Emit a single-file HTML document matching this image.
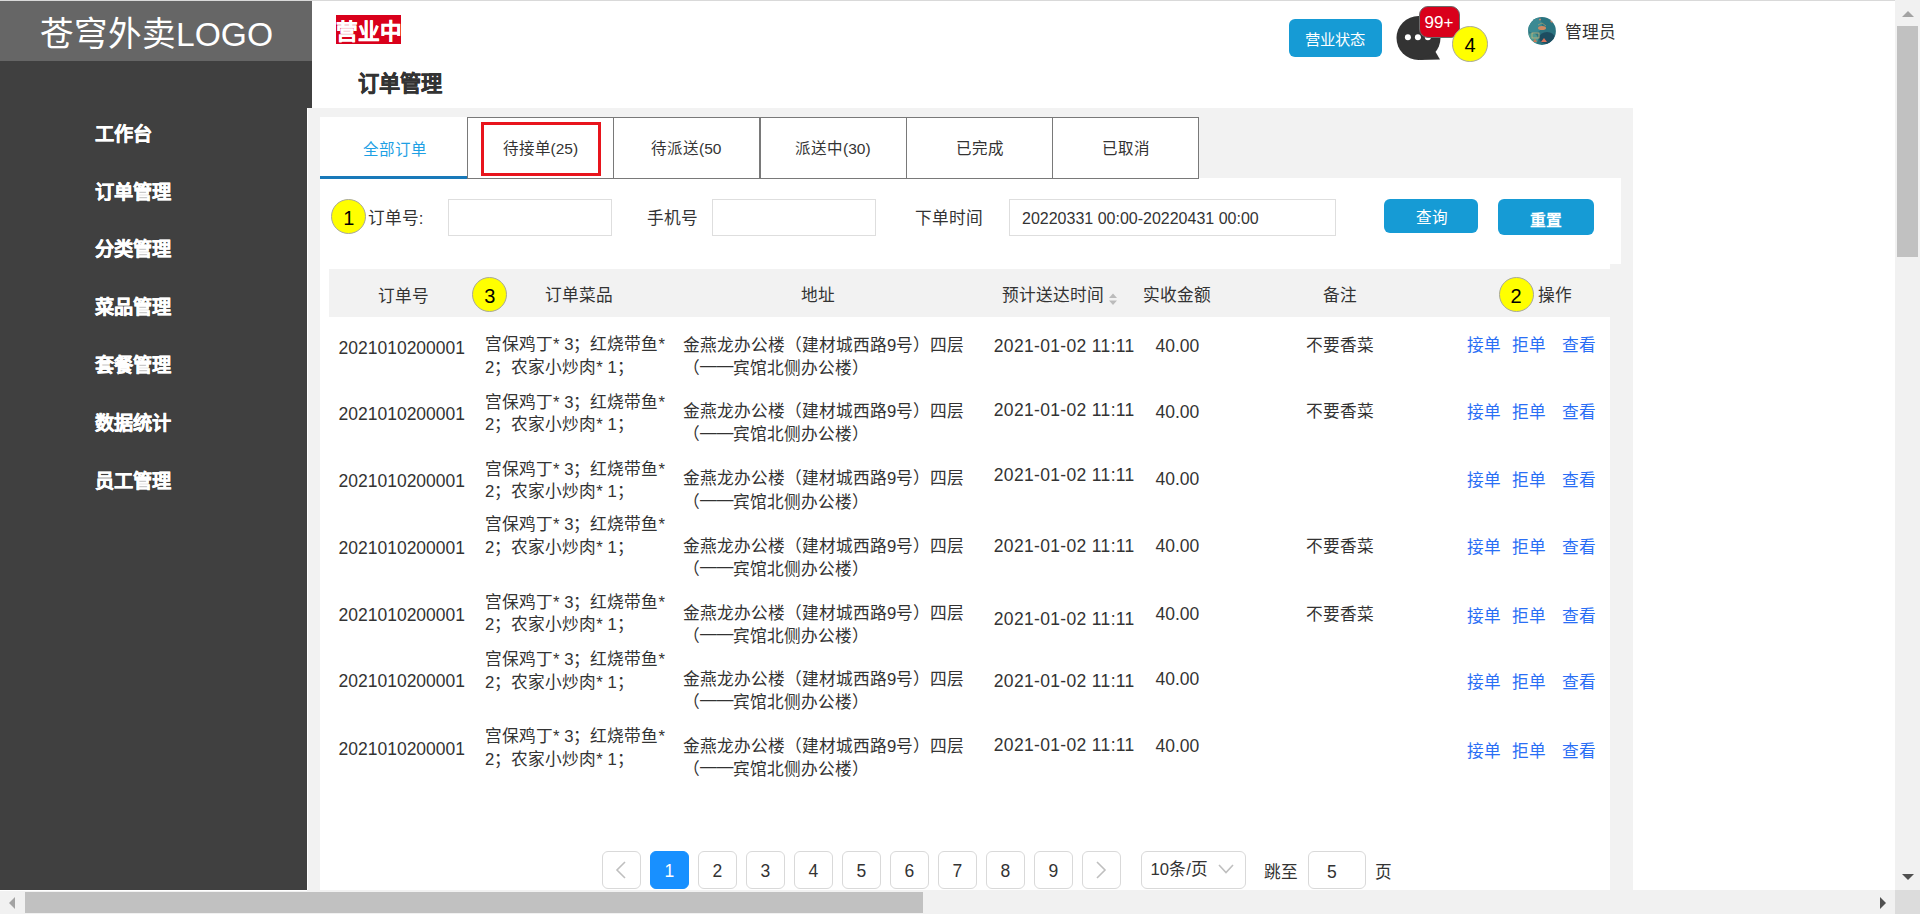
<!DOCTYPE html>
<html lang="zh-CN"><head><meta charset="utf-8"><title>订单管理</title>
<style>
html,body{margin:0;padding:0;}
body{width:1920px;height:914px;overflow:hidden;position:relative;background:#fff;font-family:"Liberation Sans", sans-serif;}
.t{position:absolute;white-space:nowrap;}
.b{position:absolute;}
.yc span{position:relative;top:1.5px;}
.yc{background:#ffff00;border:1px solid #a8a89c;border-radius:50%;box-sizing:border-box;display:flex;align-items:center;justify-content:center;font-size:20px;color:#000;}
.pb{padding-top:3px;border:1px solid #d9d9d9;border-radius:6px;box-sizing:border-box;display:flex;align-items:center;justify-content:center;font-size:17.5px;color:#333;background:#fff;}
</style></head><body>
<div class="b" style="left:0px;top:0px;width:1895px;height:1px;background:#d9d9d9;"></div>
<div class="b" style="left:0px;top:1px;width:312px;height:60px;background:#666666;"></div>
<div class="t" style="left:40px;top:18.0px;font-size:33.6px;line-height:33.6px;color:#fff;width:233.03px;text-align:justify;text-align-last:justify;">苍穹外卖LOGO</div>
<div class="b" style="left:0px;top:61px;width:312px;height:47px;background:#404040;"></div>
<div class="b" style="left:0px;top:108px;width:307px;height:782px;background:#404040;"></div>
<div class="t" style="left:95px;top:124.8px;font-size:19.2px;line-height:19.2px;color:#fff;font-weight:bold;width:57.00px;text-align:justify;text-align-last:justify;-webkit-text-stroke:0.4px #fff;">工作台</div>
<div class="t" style="left:95px;top:182.6px;font-size:19.2px;line-height:19.2px;color:#fff;font-weight:bold;width:76.00px;text-align:justify;text-align-last:justify;-webkit-text-stroke:0.4px #fff;">订单管理</div>
<div class="t" style="left:95px;top:240.4px;font-size:19.2px;line-height:19.2px;color:#fff;font-weight:bold;width:76.00px;text-align:justify;text-align-last:justify;-webkit-text-stroke:0.4px #fff;">分类管理</div>
<div class="t" style="left:95px;top:298.2px;font-size:19.2px;line-height:19.2px;color:#fff;font-weight:bold;width:76.00px;text-align:justify;text-align-last:justify;-webkit-text-stroke:0.4px #fff;">菜品管理</div>
<div class="t" style="left:95px;top:356.0px;font-size:19.2px;line-height:19.2px;color:#fff;font-weight:bold;width:76.00px;text-align:justify;text-align-last:justify;-webkit-text-stroke:0.4px #fff;">套餐管理</div>
<div class="t" style="left:95px;top:413.8px;font-size:19.2px;line-height:19.2px;color:#fff;font-weight:bold;width:76.00px;text-align:justify;text-align-last:justify;-webkit-text-stroke:0.4px #fff;">数据统计</div>
<div class="t" style="left:95px;top:471.6px;font-size:19.2px;line-height:19.2px;color:#fff;font-weight:bold;width:76.00px;text-align:justify;text-align-last:justify;-webkit-text-stroke:0.4px #fff;">员工管理</div>
<div class="b" style="left:308px;top:108px;width:1325px;height:782px;background:#f2f2f2;"></div>
<div class="b" style="left:336px;top:15px;width:65px;height:29px;background:#d9001b;"></div>
<div class="t" style="left:336px;top:20.5px;font-size:21.7px;line-height:21.7px;color:#fff;font-weight:bold;width:66.00px;text-align:justify;text-align-last:justify;-webkit-text-stroke:0.3px #fff;">营业中</div>
<div class="t" style="left:358px;top:73.0px;font-size:21.2px;line-height:21.2px;color:#333;font-weight:bold;width:84.00px;text-align:justify;text-align-last:justify;-webkit-text-stroke:0.45px #333;">订单管理</div>
<div class="b" style="left:1289px;top:19px;width:93px;height:38px;background:#169bd5;border-radius:6px;"></div>
<div class="t" style="left:1305px;top:32.0px;font-size:15.3px;line-height:15.3px;color:#fff;width:60.00px;text-align:justify;text-align-last:justify;">营业状态</div>
<svg class="b" style="left:1394px;top:14px" width="50" height="50" viewBox="0 0 50 50">
<circle cx="24.5" cy="24" r="22" fill="#333"/><path d="M24.5 46 L46 45.6 L41.3 37.6 Z" fill="#333"/>
<circle cx="13.9" cy="23.2" r="3" fill="#fff"/><circle cx="23.9" cy="23.2" r="3" fill="#fff"/><circle cx="33.9" cy="23.2" r="3" fill="#fff"/>
</svg>
<div class="b" style="left:1418.5px;top:6px;width:41px;height:31.5px;background:#d9001b;border-radius:9px;border:1px solid #6b6b6b;box-sizing:border-box;"></div>
<div class="t" style="left:1424.5px;top:14.0px;font-size:17px;line-height:17px;color:#fff;">99+</div>
<div class="b yc" style="left:1452.25px;top:26.049999999999997px;width:35.5px;height:35.5px;"><span>4</span></div>
<svg class="b" style="left:1528px;top:17px" width="28" height="28" viewBox="0 0 28 28">
<defs><clipPath id="av"><circle cx="14" cy="14" r="13.9"/></clipPath>
<filter id="bl"><feGaussianBlur stdDeviation="0.6"/></filter></defs>
<g clip-path="url(#av)">
<rect width="28" height="28" fill="#2b7480"/>
<g filter="url(#bl)">
<circle cx="6" cy="8" r="8" fill="#3a8a93"/>
<circle cx="4" cy="22" r="6" fill="#4f9a92"/>
<ellipse cx="19" cy="21" rx="8" ry="6" fill="#1f4d61"/>
<ellipse cx="14" cy="11" rx="4" ry="2" fill="#cf8a63"/>
<rect x="4" y="16" width="7" height="5" fill="none" stroke="#c9b57a" stroke-width="0.8"/>
<path d="M13 25 L16 21 L19 25 Z" fill="#d9735a"/>
<path d="M5 25 L7 21.5 L9 25 Z" fill="#c97a5a"/>
<circle cx="24" cy="4" r="1.6" fill="#d98a6a"/>
<circle cx="12" cy="2.5" r="1" fill="#d08a70"/>
<path d="M10 8 L14 6 L18 9" fill="none" stroke="#c8a46a" stroke-width="0.6"/>
</g></g></svg>
<div class="t" style="left:1565px;top:25.4px;font-size:16.7px;line-height:16.7px;color:#333;width:51.00px;text-align:justify;text-align-last:justify;">管理员</div>
<div class="b" style="left:320px;top:178px;width:1301px;height:86px;background:#fff;"></div>
<div class="b" style="left:320px;top:117px;width:147px;height:61px;background:#fff;"></div>
<div class="b" style="left:320px;top:176px;width:147px;height:3px;background:#1879b9;"></div>
<div class="t" style="left:363px;top:141.8px;font-size:15.5px;line-height:15.5px;color:#1ea0e4;width:64.00px;text-align:justify;text-align-last:justify;">全部订单</div>
<div class="b" style="left:467px;top:117px;width:147px;height:62px;background:#fff;border:1px solid #797979;box-sizing:border-box;"></div>
<div class="t" style="left:502.5px;top:141.0px;font-size:15.5px;line-height:15.5px;color:#333;width:75.58px;text-align:justify;text-align-last:justify;">待接单(25)</div>
<div class="b" style="left:613px;top:117px;width:147px;height:62px;background:#fff;border:1px solid #797979;box-sizing:border-box;"></div>
<div class="t" style="left:651px;top:141.0px;font-size:15.5px;line-height:15.5px;color:#333;width:70.41px;text-align:justify;text-align-last:justify;">待派送(50</div>
<div class="b" style="left:760px;top:117px;width:147px;height:62px;background:#fff;border:1px solid #797979;box-sizing:border-box;"></div>
<div class="t" style="left:795px;top:141.0px;font-size:15.5px;line-height:15.5px;color:#333;width:75.58px;text-align:justify;text-align-last:justify;">派送中(30)</div>
<div class="b" style="left:906px;top:117px;width:147px;height:62px;background:#fff;border:1px solid #797979;box-sizing:border-box;"></div>
<div class="t" style="left:956px;top:141.0px;font-size:15.5px;line-height:15.5px;color:#333;width:48.00px;text-align:justify;text-align-last:justify;">已完成</div>
<div class="b" style="left:1052px;top:117px;width:147px;height:62px;background:#fff;border:1px solid #797979;box-sizing:border-box;"></div>
<div class="t" style="left:1102px;top:141.0px;font-size:15.5px;line-height:15.5px;color:#333;width:48.00px;text-align:justify;text-align-last:justify;">已取消</div>
<div class="b" style="left:481px;top:122px;width:120px;height:54px;background:transparent;border:3px solid #e8141c;box-sizing:border-box;"></div>
<div class="t" style="left:367.7px;top:211.2px;font-size:16.7px;line-height:16.7px;color:#333;width:55.64px;text-align:justify;text-align-last:justify;">订单号:</div>
<div class="b" style="left:448px;top:199px;width:164px;height:37px;background:#fff;border:1px solid #dedede;box-sizing:border-box;"></div>
<div class="t" style="left:647px;top:210.8px;font-size:16.7px;line-height:16.7px;color:#333;width:51.00px;text-align:justify;text-align-last:justify;">手机号</div>
<div class="b" style="left:712px;top:199px;width:164px;height:37px;background:#fff;border:1px solid #dedede;box-sizing:border-box;"></div>
<div class="t" style="left:915px;top:210.8px;font-size:16.7px;line-height:16.7px;color:#333;width:68.00px;text-align:justify;text-align-last:justify;">下单时间</div>
<div class="b" style="left:1009px;top:199px;width:327px;height:37px;background:#fff;border:1px solid #dedede;box-sizing:border-box;"></div>
<div class="t" style="left:1022px;top:210.5px;font-size:16px;line-height:16px;color:#333;">20220331 00:00-20220431 00:00</div>
<div class="b" style="left:1384px;top:199px;width:94px;height:34px;background:#169bd5;border-radius:6px;"></div>
<div class="t" style="left:1415.6px;top:209.8px;font-size:15.6px;line-height:15.6px;color:#fff;width:32.00px;text-align:justify;text-align-last:justify;">查询</div>
<div class="b" style="left:1498px;top:199px;width:96px;height:36px;background:#169bd5;border-radius:6px;"></div>
<div class="t" style="left:1530px;top:212.9px;font-size:15.8px;line-height:15.8px;color:#fff;font-weight:bold;width:32.00px;text-align:justify;text-align-last:justify;">重置</div>
<div class="b yc" style="left:331.25px;top:199.4px;width:35.0px;height:35.0px;"><span>1</span></div>
<div class="b" style="left:320px;top:264px;width:1290px;height:626px;background:#fff;"></div>
<div class="b" style="left:329px;top:269px;width:1281px;height:48px;background:#f2f2f2;"></div>
<div class="t" style="left:378.3px;top:288.7px;font-size:16.7px;line-height:16.7px;color:#333;width:51.00px;text-align:justify;text-align-last:justify;">订单号</div>
<div class="t" style="left:545px;top:288.0px;font-size:16.7px;line-height:16.7px;color:#333;width:68.00px;text-align:justify;text-align-last:justify;">订单菜品</div>
<div class="t" style="left:800.6px;top:287.8px;font-size:16.7px;line-height:16.7px;color:#333;width:34.00px;text-align:justify;text-align-last:justify;">地址</div>
<div class="t" style="left:1001.9px;top:288.0px;font-size:16.7px;line-height:16.7px;color:#333;width:102.00px;text-align:justify;text-align-last:justify;">预计送达时间</div>
<svg class="b" style="left:1108px;top:293px" width="10" height="13" viewBox="0 0 10 13">
<path d="M5 0.5 L9 5 L1 5 Z M1 7.5 L9 7.5 L5 12 Z" fill="#bbbbbb"/></svg>
<div class="t" style="left:1142.5px;top:288.0px;font-size:16.7px;line-height:16.7px;color:#333;width:68.00px;text-align:justify;text-align-last:justify;">实收金额</div>
<div class="t" style="left:1322.7px;top:287.7px;font-size:16.7px;line-height:16.7px;color:#333;width:34.00px;text-align:justify;text-align-last:justify;">备注</div>
<div class="t" style="left:1538.3px;top:288.0px;font-size:16.7px;line-height:16.7px;color:#333;width:34.00px;text-align:justify;text-align-last:justify;">操作</div>
<div class="b yc" style="left:472.2px;top:277.2px;width:35.0px;height:35.0px;"><span>3</span></div>
<div class="b yc" style="left:1498.5px;top:277.2px;width:35.0px;height:35.0px;"><span>2</span></div>
<div class="t" style="left:338.5px;top:339.8px;font-size:17.5px;line-height:17.5px;color:#333;">2021010200001</div>
<div class="t" style="left:485px;top:337.0px;font-size:16.7px;line-height:16.7px;color:#333;width:179.91px;text-align:justify;text-align-last:justify;">宫保鸡丁* 3；红烧带鱼*</div>
<div class="t" style="left:485px;top:359.5px;font-size:16.7px;line-height:16.7px;color:#333;width:148.70px;text-align:justify;text-align-last:justify;">2；农家小炒肉* 1；</div>
<div class="t" style="left:683px;top:337.6px;font-size:16.7px;line-height:16.7px;color:#333;width:281.28px;text-align:justify;text-align-last:justify;">金燕龙办公楼（建材城西路9号）四层</div>
<div class="t" style="left:683px;top:361.0px;font-size:16.7px;line-height:16.7px;color:#333;width:186.38px;text-align:justify;text-align-last:justify;">（<span style="position:relative;top:-2.8px">——</span>宾馆北侧办公楼）</div>
<div class="t" style="left:993.8px;top:337.5px;font-size:17.5px;line-height:17.5px;color:#333;letter-spacing:0.33px;">2021-01-02 11:11</div>
<div class="t" style="left:1155.5px;top:338.2px;font-size:17.5px;line-height:17.5px;color:#333;">40.00</div>
<div class="t" style="left:1305.5px;top:338.0px;font-size:16.7px;line-height:16.7px;color:#333;width:68.00px;text-align:justify;text-align-last:justify;">不要香菜</div>
<div class="t" style="left:1466.6px;top:338.2px;font-size:16.7px;line-height:16.7px;color:#2a6ef5;width:34.00px;text-align:justify;text-align-last:justify;">接单</div>
<div class="t" style="left:1511.6px;top:338.2px;font-size:16.7px;line-height:16.7px;color:#2a6ef5;width:34.00px;text-align:justify;text-align-last:justify;">拒单</div>
<div class="t" style="left:1561.8px;top:338.2px;font-size:16.7px;line-height:16.7px;color:#2a6ef5;width:34.00px;text-align:justify;text-align-last:justify;">查看</div>
<div class="t" style="left:338.5px;top:405.8px;font-size:17.5px;line-height:17.5px;color:#333;">2021010200001</div>
<div class="t" style="left:485px;top:394.5px;font-size:16.7px;line-height:16.7px;color:#333;width:179.91px;text-align:justify;text-align-last:justify;">宫保鸡丁* 3；红烧带鱼*</div>
<div class="t" style="left:485px;top:417.0px;font-size:16.7px;line-height:16.7px;color:#333;width:148.70px;text-align:justify;text-align-last:justify;">2；农家小炒肉* 1；</div>
<div class="t" style="left:683px;top:404.0px;font-size:16.7px;line-height:16.7px;color:#333;width:281.28px;text-align:justify;text-align-last:justify;">金燕龙办公楼（建材城西路9号）四层</div>
<div class="t" style="left:683px;top:427.4px;font-size:16.7px;line-height:16.7px;color:#333;width:186.38px;text-align:justify;text-align-last:justify;">（<span style="position:relative;top:-2.8px">——</span>宾馆北侧办公楼）</div>
<div class="t" style="left:993.8px;top:402.2px;font-size:17.5px;line-height:17.5px;color:#333;letter-spacing:0.33px;">2021-01-02 11:11</div>
<div class="t" style="left:1155.5px;top:403.8px;font-size:17.5px;line-height:17.5px;color:#333;">40.00</div>
<div class="t" style="left:1305.5px;top:403.7px;font-size:16.7px;line-height:16.7px;color:#333;width:68.00px;text-align:justify;text-align-last:justify;">不要香菜</div>
<div class="t" style="left:1466.6px;top:404.5px;font-size:16.7px;line-height:16.7px;color:#2a6ef5;width:34.00px;text-align:justify;text-align-last:justify;">接单</div>
<div class="t" style="left:1511.6px;top:404.5px;font-size:16.7px;line-height:16.7px;color:#2a6ef5;width:34.00px;text-align:justify;text-align-last:justify;">拒单</div>
<div class="t" style="left:1561.8px;top:404.5px;font-size:16.7px;line-height:16.7px;color:#2a6ef5;width:34.00px;text-align:justify;text-align-last:justify;">查看</div>
<div class="t" style="left:338.5px;top:472.5px;font-size:17.5px;line-height:17.5px;color:#333;">2021010200001</div>
<div class="t" style="left:485px;top:461.5px;font-size:16.7px;line-height:16.7px;color:#333;width:179.91px;text-align:justify;text-align-last:justify;">宫保鸡丁* 3；红烧带鱼*</div>
<div class="t" style="left:485px;top:484.0px;font-size:16.7px;line-height:16.7px;color:#333;width:148.70px;text-align:justify;text-align-last:justify;">2；农家小炒肉* 1；</div>
<div class="t" style="left:683px;top:471.3px;font-size:16.7px;line-height:16.7px;color:#333;width:281.28px;text-align:justify;text-align-last:justify;">金燕龙办公楼（建材城西路9号）四层</div>
<div class="t" style="left:683px;top:494.7px;font-size:16.7px;line-height:16.7px;color:#333;width:186.38px;text-align:justify;text-align-last:justify;">（<span style="position:relative;top:-2.8px">——</span>宾馆北侧办公楼）</div>
<div class="t" style="left:993.8px;top:467.1px;font-size:17.5px;line-height:17.5px;color:#333;letter-spacing:0.33px;">2021-01-02 11:11</div>
<div class="t" style="left:1155.5px;top:470.5px;font-size:17.5px;line-height:17.5px;color:#333;">40.00</div>
<div class="t" style="left:1466.6px;top:473.4px;font-size:16.7px;line-height:16.7px;color:#2a6ef5;width:34.00px;text-align:justify;text-align-last:justify;">接单</div>
<div class="t" style="left:1511.6px;top:473.4px;font-size:16.7px;line-height:16.7px;color:#2a6ef5;width:34.00px;text-align:justify;text-align-last:justify;">拒单</div>
<div class="t" style="left:1561.8px;top:473.4px;font-size:16.7px;line-height:16.7px;color:#2a6ef5;width:34.00px;text-align:justify;text-align-last:justify;">查看</div>
<div class="t" style="left:338.5px;top:540.0px;font-size:17.5px;line-height:17.5px;color:#333;">2021010200001</div>
<div class="t" style="left:485px;top:517.4px;font-size:16.7px;line-height:16.7px;color:#333;width:179.91px;text-align:justify;text-align-last:justify;">宫保鸡丁* 3；红烧带鱼*</div>
<div class="t" style="left:485px;top:539.9px;font-size:16.7px;line-height:16.7px;color:#333;width:148.70px;text-align:justify;text-align-last:justify;">2；农家小炒肉* 1；</div>
<div class="t" style="left:683px;top:538.8px;font-size:16.7px;line-height:16.7px;color:#333;width:281.28px;text-align:justify;text-align-last:justify;">金燕龙办公楼（建材城西路9号）四层</div>
<div class="t" style="left:683px;top:562.2px;font-size:16.7px;line-height:16.7px;color:#333;width:186.38px;text-align:justify;text-align-last:justify;">（<span style="position:relative;top:-2.8px">——</span>宾馆北侧办公楼）</div>
<div class="t" style="left:993.8px;top:537.7px;font-size:17.5px;line-height:17.5px;color:#333;letter-spacing:0.33px;">2021-01-02 11:11</div>
<div class="t" style="left:1155.5px;top:537.7px;font-size:17.5px;line-height:17.5px;color:#333;">40.00</div>
<div class="t" style="left:1305.5px;top:539.0px;font-size:16.7px;line-height:16.7px;color:#333;width:68.00px;text-align:justify;text-align-last:justify;">不要香菜</div>
<div class="t" style="left:1466.6px;top:539.8px;font-size:16.7px;line-height:16.7px;color:#2a6ef5;width:34.00px;text-align:justify;text-align-last:justify;">接单</div>
<div class="t" style="left:1511.6px;top:539.8px;font-size:16.7px;line-height:16.7px;color:#2a6ef5;width:34.00px;text-align:justify;text-align-last:justify;">拒单</div>
<div class="t" style="left:1561.8px;top:539.8px;font-size:16.7px;line-height:16.7px;color:#2a6ef5;width:34.00px;text-align:justify;text-align-last:justify;">查看</div>
<div class="t" style="left:338.5px;top:607.0px;font-size:17.5px;line-height:17.5px;color:#333;">2021010200001</div>
<div class="t" style="left:485px;top:594.6px;font-size:16.7px;line-height:16.7px;color:#333;width:179.91px;text-align:justify;text-align-last:justify;">宫保鸡丁* 3；红烧带鱼*</div>
<div class="t" style="left:485px;top:617.1px;font-size:16.7px;line-height:16.7px;color:#333;width:148.70px;text-align:justify;text-align-last:justify;">2；农家小炒肉* 1；</div>
<div class="t" style="left:683px;top:605.8px;font-size:16.7px;line-height:16.7px;color:#333;width:281.28px;text-align:justify;text-align-last:justify;">金燕龙办公楼（建材城西路9号）四层</div>
<div class="t" style="left:683px;top:629.2px;font-size:16.7px;line-height:16.7px;color:#333;width:186.38px;text-align:justify;text-align-last:justify;">（<span style="position:relative;top:-2.8px">——</span>宾馆北侧办公楼）</div>
<div class="t" style="left:993.8px;top:610.7px;font-size:17.5px;line-height:17.5px;color:#333;letter-spacing:0.33px;">2021-01-02 11:11</div>
<div class="t" style="left:1155.5px;top:605.7px;font-size:17.5px;line-height:17.5px;color:#333;">40.00</div>
<div class="t" style="left:1305.5px;top:606.6px;font-size:16.7px;line-height:16.7px;color:#333;width:68.00px;text-align:justify;text-align-last:justify;">不要香菜</div>
<div class="t" style="left:1466.6px;top:608.7px;font-size:16.7px;line-height:16.7px;color:#2a6ef5;width:34.00px;text-align:justify;text-align-last:justify;">接单</div>
<div class="t" style="left:1511.6px;top:608.7px;font-size:16.7px;line-height:16.7px;color:#2a6ef5;width:34.00px;text-align:justify;text-align-last:justify;">拒单</div>
<div class="t" style="left:1561.8px;top:608.7px;font-size:16.7px;line-height:16.7px;color:#2a6ef5;width:34.00px;text-align:justify;text-align-last:justify;">查看</div>
<div class="t" style="left:338.5px;top:673.0px;font-size:17.5px;line-height:17.5px;color:#333;">2021010200001</div>
<div class="t" style="left:485px;top:652.2px;font-size:16.7px;line-height:16.7px;color:#333;width:179.91px;text-align:justify;text-align-last:justify;">宫保鸡丁* 3；红烧带鱼*</div>
<div class="t" style="left:485px;top:674.7px;font-size:16.7px;line-height:16.7px;color:#333;width:148.70px;text-align:justify;text-align-last:justify;">2；农家小炒肉* 1；</div>
<div class="t" style="left:683px;top:671.8px;font-size:16.7px;line-height:16.7px;color:#333;width:281.28px;text-align:justify;text-align-last:justify;">金燕龙办公楼（建材城西路9号）四层</div>
<div class="t" style="left:683px;top:695.2px;font-size:16.7px;line-height:16.7px;color:#333;width:186.38px;text-align:justify;text-align-last:justify;">（<span style="position:relative;top:-2.8px">——</span>宾馆北侧办公楼）</div>
<div class="t" style="left:993.8px;top:673.0px;font-size:17.5px;line-height:17.5px;color:#333;letter-spacing:0.33px;">2021-01-02 11:11</div>
<div class="t" style="left:1155.5px;top:671.4px;font-size:17.5px;line-height:17.5px;color:#333;">40.00</div>
<div class="t" style="left:1466.6px;top:674.7px;font-size:16.7px;line-height:16.7px;color:#2a6ef5;width:34.00px;text-align:justify;text-align-last:justify;">接单</div>
<div class="t" style="left:1511.6px;top:674.7px;font-size:16.7px;line-height:16.7px;color:#2a6ef5;width:34.00px;text-align:justify;text-align-last:justify;">拒单</div>
<div class="t" style="left:1561.8px;top:674.7px;font-size:16.7px;line-height:16.7px;color:#2a6ef5;width:34.00px;text-align:justify;text-align-last:justify;">查看</div>
<div class="t" style="left:338.5px;top:741.4px;font-size:17.5px;line-height:17.5px;color:#333;">2021010200001</div>
<div class="t" style="left:485px;top:729.4px;font-size:16.7px;line-height:16.7px;color:#333;width:179.91px;text-align:justify;text-align-last:justify;">宫保鸡丁* 3；红烧带鱼*</div>
<div class="t" style="left:485px;top:751.9px;font-size:16.7px;line-height:16.7px;color:#333;width:148.70px;text-align:justify;text-align-last:justify;">2；农家小炒肉* 1；</div>
<div class="t" style="left:683px;top:738.5px;font-size:16.7px;line-height:16.7px;color:#333;width:281.28px;text-align:justify;text-align-last:justify;">金燕龙办公楼（建材城西路9号）四层</div>
<div class="t" style="left:683px;top:761.9px;font-size:16.7px;line-height:16.7px;color:#333;width:186.38px;text-align:justify;text-align-last:justify;">（<span style="position:relative;top:-2.8px">——</span>宾馆北侧办公楼）</div>
<div class="t" style="left:993.8px;top:737.0px;font-size:17.5px;line-height:17.5px;color:#333;letter-spacing:0.33px;">2021-01-02 11:11</div>
<div class="t" style="left:1155.5px;top:738.0px;font-size:17.5px;line-height:17.5px;color:#333;">40.00</div>
<div class="t" style="left:1466.6px;top:743.6px;font-size:16.7px;line-height:16.7px;color:#2a6ef5;width:34.00px;text-align:justify;text-align-last:justify;">接单</div>
<div class="t" style="left:1511.6px;top:743.6px;font-size:16.7px;line-height:16.7px;color:#2a6ef5;width:34.00px;text-align:justify;text-align-last:justify;">拒单</div>
<div class="t" style="left:1561.8px;top:743.6px;font-size:16.7px;line-height:16.7px;color:#2a6ef5;width:34.00px;text-align:justify;text-align-last:justify;">查看</div>
<div class="b pb" style="left:602px;top:851px;width:38.5px;height:37.5px;"><svg width="12" height="18" viewBox="0 0 12 18" style="margin-top:-3px"><path d="M10 1 L2 9 L10 17" fill="none" stroke="#bfbfbf" stroke-width="1.6"/></svg></div>
<div class="b pb" style="left:650px;top:851px;width:38.5px;height:37.5px;background:#1890ff;border-color:#1890ff;color:#fff">1</div>
<div class="b pb" style="left:698px;top:851px;width:38.5px;height:37.5px;">2</div>
<div class="b pb" style="left:746px;top:851px;width:38.5px;height:37.5px;">3</div>
<div class="b pb" style="left:794px;top:851px;width:38.5px;height:37.5px;">4</div>
<div class="b pb" style="left:842px;top:851px;width:38.5px;height:37.5px;">5</div>
<div class="b pb" style="left:890px;top:851px;width:38.5px;height:37.5px;">6</div>
<div class="b pb" style="left:938px;top:851px;width:38.5px;height:37.5px;">7</div>
<div class="b pb" style="left:986px;top:851px;width:38.5px;height:37.5px;">8</div>
<div class="b pb" style="left:1034px;top:851px;width:38.5px;height:37.5px;">9</div>
<div class="b pb" style="left:1082px;top:851px;width:38.5px;height:37.5px;"><svg width="12" height="18" viewBox="0 0 12 18" style="margin-top:-3px"><path d="M2 1 L10 9 L2 17" fill="none" stroke="#bfbfbf" stroke-width="1.6"/></svg></div>
<div class="b pb" style="left:1140.5px;top:851px;width:105px;height:37.5px;"></div>
<div class="t" style="left:1150.6px;top:862.2px;font-size:16.7px;line-height:16.7px;color:#333;width:57.20px;text-align:justify;text-align-last:justify;">10条/页</div>
<svg class="b" style="left:1218px;top:864px" width="16" height="10" viewBox="0 0 16 10">
<path d="M1 1 L8 8.5 L15 1" fill="none" stroke="#bfbfbf" stroke-width="1.6"/></svg>
<div class="t" style="left:1264px;top:864.9px;font-size:16.7px;line-height:16.7px;color:#333;width:34.00px;text-align:justify;text-align-last:justify;">跳至</div>
<div class="b pb" style="left:1308px;top:851px;width:57.5px;height:37.5px;"></div>
<div class="t" style="left:1327px;top:863.9px;font-size:17.5px;line-height:17.5px;color:#333;">5</div>
<div class="t" style="left:1375px;top:864.9px;font-size:16.7px;line-height:16.7px;color:#333;width:17.00px;text-align:justify;text-align-last:justify;">页</div>
<div class="b" style="left:307px;top:108px;width:1px;height:782px;background:#ffffff;"></div>
<div class="b" style="left:0px;top:890px;width:1895px;height:24px;background:#f1f1f1;"></div>
<div class="b" style="left:0px;top:890px;width:307px;height:1px;background:#ffffff;"></div>
<div class="b" style="left:25px;top:892px;width:898px;height:21px;background:#c1c1c1;"></div>
<svg class="b" style="left:8px;top:896px" width="8" height="14" viewBox="0 0 8 14"><path d="M7 1 L1 7 L7 13 Z" fill="#a3a3a3"/></svg>
<svg class="b" style="left:1879px;top:896px" width="8" height="14" viewBox="0 0 8 14"><path d="M1 1 L7 7 L1 13 Z" fill="#505050"/></svg>
<div class="b" style="left:1895px;top:0px;width:25px;height:890px;background:#f1f1f1;"></div>
<div class="b" style="left:1897px;top:26px;width:21px;height:231px;background:#c1c1c1;"></div>
<svg class="b" style="left:1901px;top:10px" width="14" height="8" viewBox="0 0 14 8"><path d="M1 7 L7 1 L13 7 Z" fill="#a3a3a3"/></svg>
<svg class="b" style="left:1901px;top:873px" width="14" height="8" viewBox="0 0 14 8"><path d="M1 1 L7 7 L13 1 Z" fill="#505050"/></svg>
<div class="b" style="left:1895px;top:890px;width:25px;height:24px;background:#dcdcdc;"></div>
</body></html>
